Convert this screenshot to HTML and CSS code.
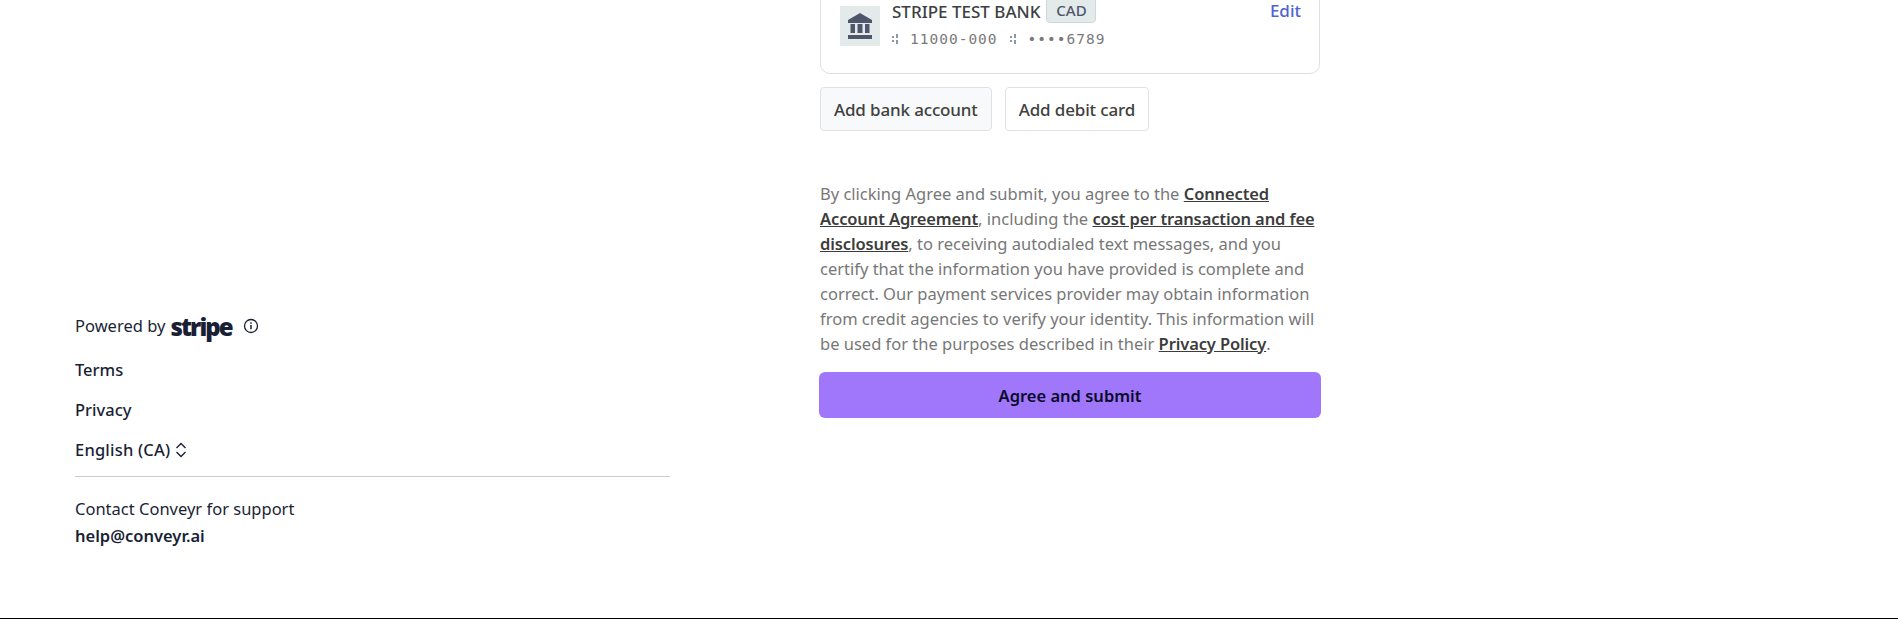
FILE: index.html
```html
<!DOCTYPE html>
<html lang="en">
<head>
  <meta charset="UTF-8" />
  <meta name="viewport" content="width=device-width, initial-scale=1.0" />
  <title>Payout details</title>
  <link rel="stylesheet" href="styles.css">
</head>
<body>
  <div class="page">
    <aside class="sidebar">
      <div class="powered">
        <span>Powered by</span>
        <span class="stripe-logo">stripe</span>
        <svg class="info-icon" width="16" height="16" viewBox="0 0 16 16" fill="none" stroke="#1a1f36">
          <circle cx="8" cy="8" r="6.5" stroke-width="1.3" />
          <path d="M8 7v4.200" stroke-width="1.5" />
          <path d="M8 4.200v1.500" stroke-width="1.5" />
        </svg>
      </div>
      <a class="side-link" href="#">Terms</a>
      <a class="side-link" href="#">Privacy</a>
      <a class="side-link lang" href="#">
        English (CA)
        <svg width="12" height="16" viewBox="0 0 12 16" fill="none" stroke="#1a1f36" stroke-width="1.4">
          <path d="M1.500 6 6 1.500 10.500 6" />
          <path d="M1.500 10 6 14.500 10.500 10" />
        </svg>
      </a>
      <div class="support">
        <p>Contact Conveyr for support</p>
        <a href="#">help@conveyr.ai</a>
      </div>
    </aside>

    <main class="content">
      <div class="bank-card">
        <div class="bank-icon">
          <svg width="24" height="26" viewBox="0 0 24 26" fill="#4f566b">
            <path d="M12 0 24 7v3H0V7z" />
            <path d="M2.500 11H7v9H2.500zM9.500 11h5v9h-5zM17 11h4.500v9H17z" />
            <path d="M0 22h24v4H0z" />
          </svg>
        </div>
        <div class="bank-info">
          <div class="bank-name">
            <span>STRIPE TEST BANK</span>
            <span class="badge">CAD</span>
          </div>
          <div class="bank-numbers">
            <svg class="routing-mark" width="6" height="12" viewBox="0 0 6 12" fill="#8a99a8"><path d="M0 3h2v2H0zM0 7h2v2H0zM4 1h2v4H4zM4 7h2v4H4z" /></svg>
            <span>11000-000</span>
            <svg class="routing-mark" width="6" height="12" viewBox="0 0 6 12" fill="#8a99a8"><path d="M0 3h2v2H0zM0 7h2v2H0zM4 1h2v4H4zM4 7h2v4H4z" /></svg>
            <span>••••6789</span>
          </div>
        </div>
        <a class="edit-link" href="#">Edit</a>
      </div>

      <div class="add-buttons">
        <button class="add-btn add-btn-active">Add bank account</button>
        <button class="add-btn">Add debit card</button>
      </div>

      <p class="legal">By clicking Agree and submit, you agree to the <a href="#">Connected Account Agreement</a>, including the <a href="#">cost per transaction and fee disclosures</a>, to receiving autodialed text messages, and you certify that the information you have provided is complete and correct. Our payment services provider may obtain information from credit agencies to verify your identity. This information will be used for the purposes described in their <a href="#">Privacy Policy</a>.</p>

      <button class="submit-btn">Agree and submit</button>
    </main>
  </div>
</body>
</html>
```

FILE: styles.css
```css
html, body {
  margin: 0;
  height: 619px;
  overflow: hidden;
  background: #fff;
}
body {
  font-family: 'Noto Sans', 'Open Sans', sans-serif;
  font-size: 16.5px;
  color: #1a1f36;
}
a {
  color: inherit;
  text-decoration: none;
}
.page {
  display: flex;
  height: 618px;
  border-bottom: 1px solid #000;
}
.sidebar {
  width: 595px;
  margin-left: 75px;
  padding-top: 311px;
  display: flex;
  flex-direction: column;
  align-items: flex-start;
}
.powered {
  display: flex;
  align-items: center;
  gap: 5px;
  height: 28px;
}
.stripe-logo {
  font-family: 'Open Sans', sans-serif;
  font-weight: 800;
  font-size: 24px;
  line-height: 28px;
  letter-spacing: -1.9px;
  color: #1a1f36;
  margin-top: 3px;
}
.info-icon {
  margin-left: 6px;
  margin-top: 1px;
}
.side-link {
  font-weight: 500;
  line-height: 24px;
  margin-top: 16px;
}
.powered + .side-link {
  margin-top: 19px;
}
.lang {
  display: flex;
  align-items: center;
  gap: 5px;
  letter-spacing: 0.2px;
}
.support {
  align-self: stretch;
  margin-top: 14px;
  padding-top: 20px;
  border-top: 1px solid #ccc;
}
.support p {
  margin: 0 0 3px;
  line-height: 24px;
}
.support a {
  font-weight: 600;
  line-height: 24px;
}
.content {
  width: 500px;
  margin-left: 150px;
}
.bank-card {
  display: flex;
  box-sizing: border-box;
  height: 94px;
  margin-top: -20px;
  padding: 25px 19px 0;
  border: 1px solid #dcdfe3;
  border-radius: 10px;
}
.bank-icon {
  width: 40px;
  height: 40px;
  flex: none;
  display: flex;
  align-items: center;
  justify-content: center;
  background: #e3eaea;
}
.bank-info {
  margin-left: 12px;
  flex: 1;
  margin-top: -10px;
}
.bank-name {
  display: flex;
  align-items: center;
  gap: 6px;
  font-size: 17px;
  font-weight: 500;
  color: #3c4043;
  height: 30px;
}
.badge {
  box-sizing: border-box;
  height: 26px;
  width: 50px;
  margin-top: -2px;
  text-align: center;
  line-height: 24px;
  font-size: 15px;
  color: #4f566b;
  background: #e3eaea;
  border: 1px solid #cfd8d8;
  border-radius: 4px;
}
.bank-numbers {
  display: flex;
  align-items: center;
  gap: 12px;
  height: 24px;
  margin-top: 1px;
  font-family: 'DejaVu Sans Mono', 'Liberation Mono', monospace;
  font-size: 14.5px;
  letter-spacing: 1px;
  color: #7a7a7a;
}
.edit-link {
  color: #4f63d2;
  font-size: 17px;
  font-weight: 500;
  margin-top: -10px;
  margin-right: -1px;
  line-height: 30px;
}
.add-buttons {
  display: flex;
  gap: 13px;
  margin-top: 13px;
}
.add-btn {
  box-sizing: border-box;
  height: 44px;
  padding: 0 13px;
  font-family: inherit;
  font-size: 17px;
  font-weight: 500;
  letter-spacing: -0.15px;
  color: #404040;
  background: #fff;
  border: 1px solid #dfe2e5;
  border-radius: 4px;
}
.add-btn-active {
  background: #f8f9fa;
}
.legal {
  margin: 50px 0 0;
  line-height: 25px;
  color: #777;
}
.legal a {
  color: #3c3c3c;
  font-weight: 600;
  letter-spacing: -0.12px;
  text-decoration: underline;
}
.submit-btn {
  display: block;
  box-sizing: border-box;
  width: 502px;
  height: 46px;
  margin: 16px 0 0 -1px;
  font-family: inherit;
  font-size: 16.5px;
  font-weight: 600;
  color: #0a0a2a;
  background: #a076fb;
  border: none;
  border-radius: 6px;
}
```
